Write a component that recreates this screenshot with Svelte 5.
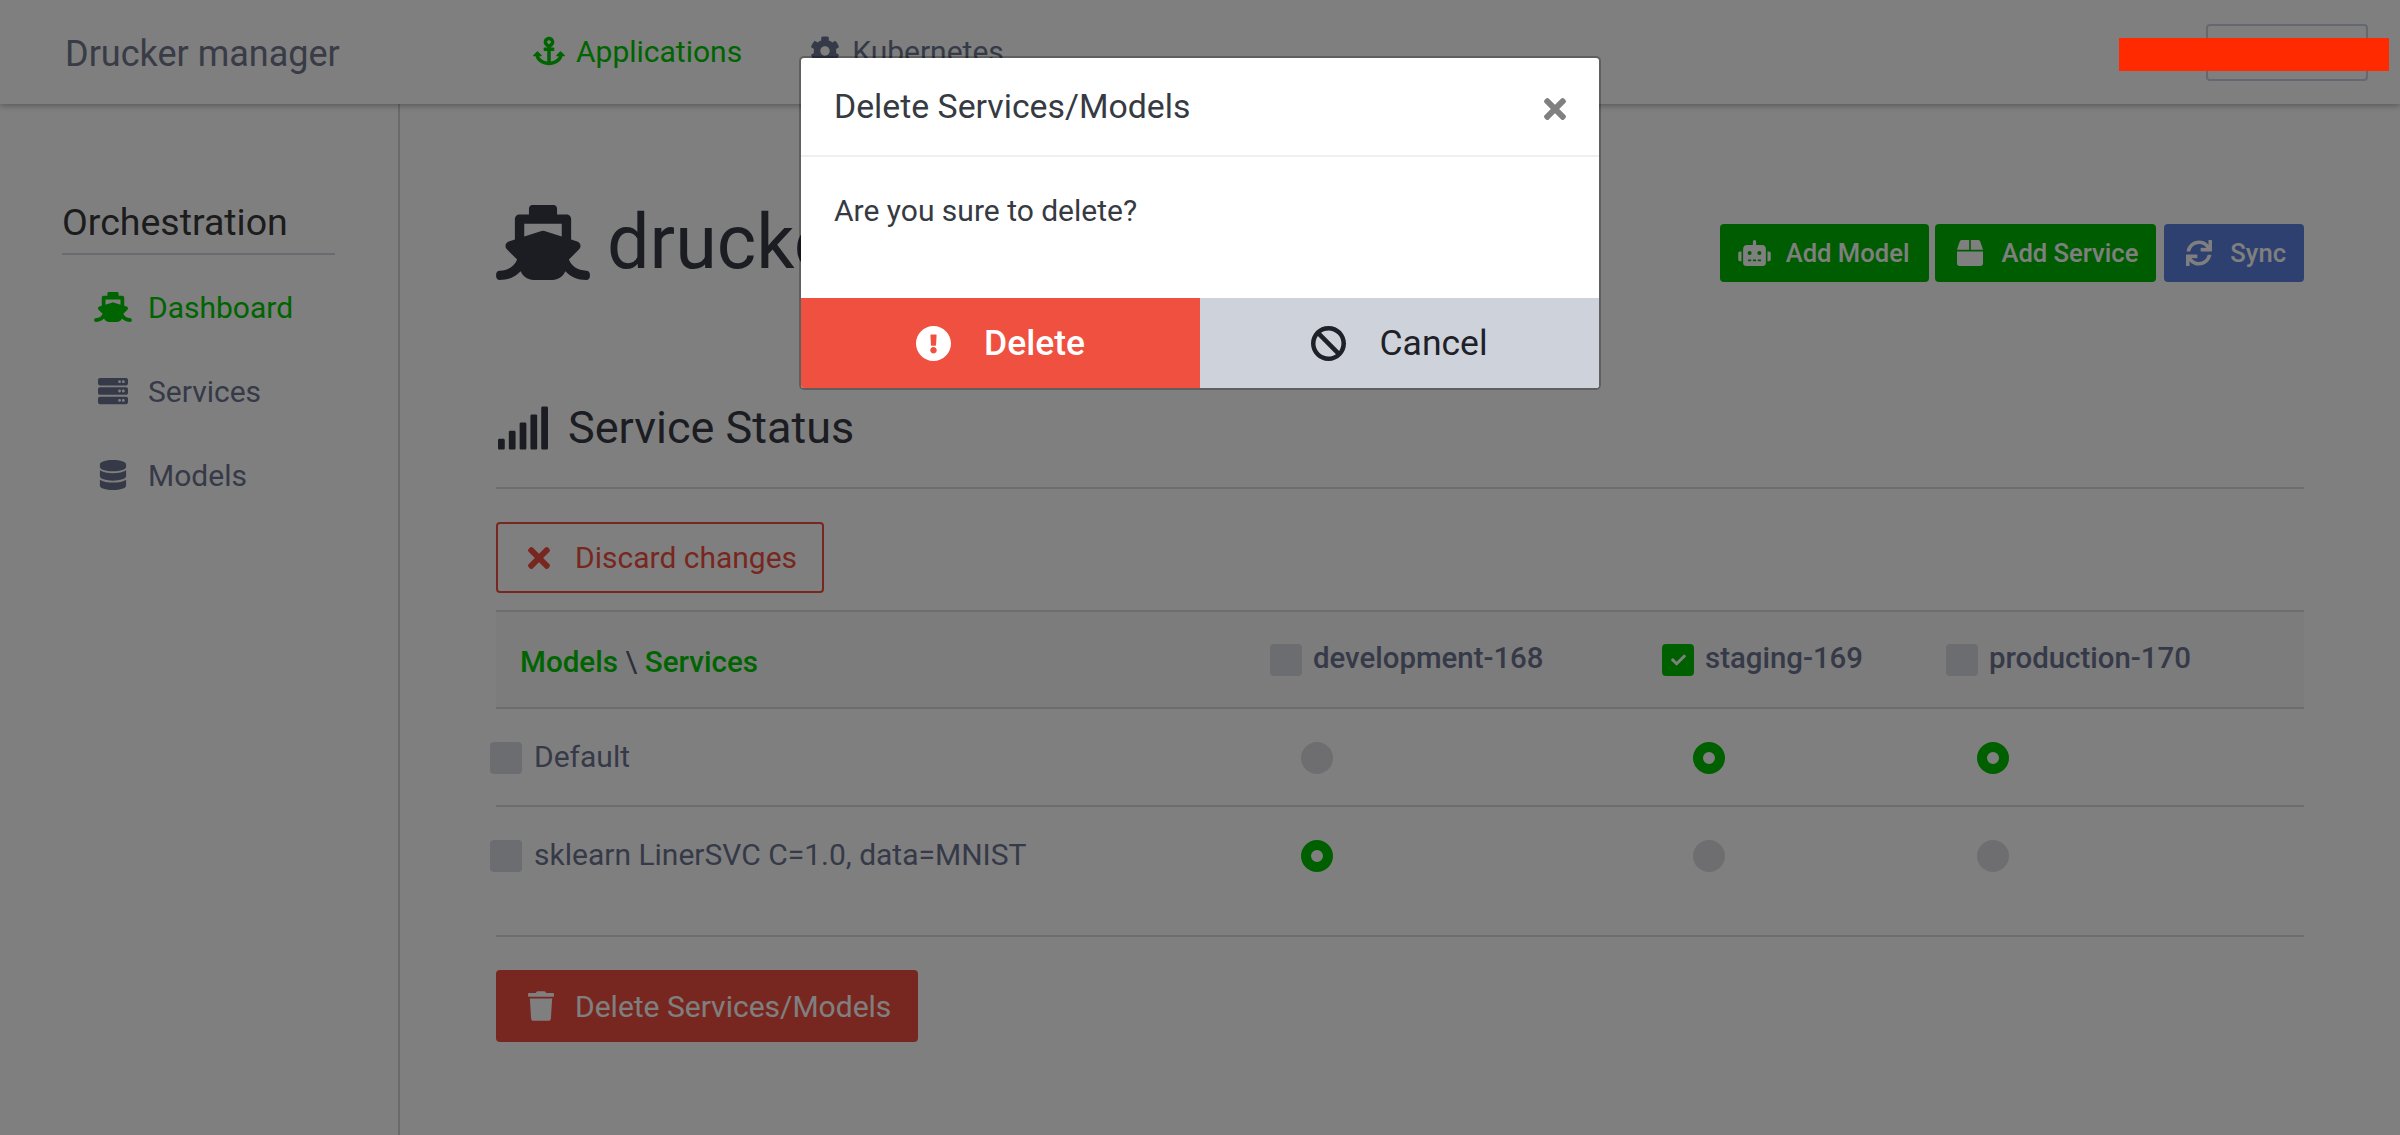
<script>
	const icons = {
		ship: ['0 0 640 512', 'M496.616 372.639l70.012-70.012c16.899-16.9 9.942-45.771-12.836-53.092L512 236.102V96c0-17.673-14.327-32-32-32h-64V24c0-13.255-10.745-24-24-24H248c-13.255 0-24 10.745-24 24v40h-64c-17.673 0-32 14.327-32 32v140.102l-41.792 13.433c-22.753 7.313-29.754 36.173-12.836 53.092l70.012 70.012C125.828 416.287 85.587 448 24 448c-13.255 0-24 10.745-24 24v16c0 13.255 10.745 24 24 24 61.023 0 107.499-20.61 143.258-59.396C181.677 487.432 216.021 512 256 512h128c39.979 0 74.323-24.568 88.742-59.396C508.495 491.384 554.968 512 616 512c13.255 0 24-10.745 24-24v-16c0-13.255-10.745-24-24-24-60.817 0-101.542-31.001-119.384-75.361zM192 128h256v87.531l-118.208-37.995a31.995 31.995 0 0 0-19.584 0L192 215.531V128z'],
		anchor: ['0 0 576 512', 'M12.971 352h32.394C67.172 454.735 181.944 512 288 512c106.229 0 220.853-57.38 242.635-160h32.394c10.691 0 16.045-12.926 8.485-20.485l-67.029-67.029c-4.686-4.686-12.284-4.686-16.971 0l-67.029 67.029c-7.56 7.56-2.206 20.485 8.485 20.485h35.146c-20.29 54.317-84.963 86.588-144.117 94.015V256h52c6.627 0 12-5.373 12-12v-40c0-6.627-5.373-12-12-12h-52v-5.47c37.281-13.178 63.995-48.725 64-90.518C384.005 43.772 341.605.738 289.37.01 235.723-.739 192 42.525 192 96c0 41.798 26.716 77.35 64 90.53V192h-52c-6.627 0-12 5.373-12 12v40c0 6.627 5.373 12 12 12h52v190.015c-58.936-7.399-123.82-39.679-144.117-94.015h35.146c10.691 0 16.045-12.926 8.485-20.485l-67.029-67.029c-4.686-4.686-12.284-4.686-16.971 0L4.485 331.515C-3.074 339.074 2.28 352 12.971 352zM288 64c17.645 0 32 14.355 32 32s-14.355 32-32 32-32-14.355-32-32 14.355-32 32-32z'],
		cog: ['0 0 512 512', 'M487.4 315.7l-42.6-24.6c4.3-23.2 4.3-47 0-70.2l42.6-24.6c4.9-2.8 7.1-8.6 5.5-14-11.1-35.6-30-67.8-54.7-94.6-3.8-4.1-10-5.1-14.8-2.3L380.8 110c-17.9-15.4-38.5-27.3-60.8-35.1V25.8c0-5.6-3.9-10.5-9.4-11.7-36.7-8.2-74.3-7.8-109.2 0-5.5 1.2-9.4 6.1-9.4 11.7V75c-22.2 7.9-42.8 19.8-60.8 35.1L88.7 85.5c-4.9-2.8-11-1.9-14.8 2.3-24.7 26.7-43.6 58.9-54.7 94.6-1.7 5.4.6 11.2 5.5 14L67.3 221c-4.3 23.2-4.3 47 0 70.2l-42.6 24.6c-4.9 2.8-7.1 8.6-5.5 14 11.1 35.6 30 67.8 54.7 94.6 3.8 4.1 10 5.1 14.8 2.3l42.6-24.6c17.9 15.4 38.5 27.3 60.8 35.1v49.2c0 5.6 3.9 10.5 9.4 11.7 36.7 8.2 74.3 7.8 109.2 0 5.5-1.2 9.4-6.1 9.4-11.7v-49.2c22.2-7.9 42.8-19.8 60.8-35.1l42.6 24.6c4.9 2.8 11 1.9 14.8-2.3 24.7-26.7 43.6-58.9 54.7-94.6 1.5-5.5-.7-11.3-5.6-14.1zM256 336c-44.1 0-80-35.9-80-80s35.9-80 80-80 80 35.9 80 80-35.9 80-80 80z'],
		server: ['0 0 512 512', 'M480 160H32c-17.673 0-32-14.327-32-32V64c0-17.673 14.327-32 32-32h448c17.673 0 32 14.327 32 32v64c0 17.673-14.327 32-32 32zm-48-88c-13.255 0-24 10.745-24 24s10.745 24 24 24 24-10.745 24-24-10.745-24-24-24zm-64 0c-13.255 0-24 10.745-24 24s10.745 24 24 24 24-10.745 24-24-10.745-24-24-24zm112 248H32c-17.673 0-32-14.327-32-32v-64c0-17.673 14.327-32 32-32h448c17.673 0 32 14.327 32 32v64c0 17.673-14.327 32-32 32zm-48-88c-13.255 0-24 10.745-24 24s10.745 24 24 24 24-10.745 24-24-10.745-24-24-24zm-64 0c-13.255 0-24 10.745-24 24s10.745 24 24 24 24-10.745 24-24-10.745-24-24-24zm112 248H32c-17.673 0-32-14.327-32-32v-64c0-17.673 14.327-32 32-32h448c17.673 0 32 14.327 32 32v64c0 17.673-14.327 32-32 32zm-48-88c-13.255 0-24 10.745-24 24s10.745 24 24 24 24-10.745 24-24-10.745-24-24-24zm-64 0c-13.255 0-24 10.745-24 24s10.745 24 24 24 24-10.745 24-24-10.745-24-24-24z'],
		database: ['0 0 448 512', 'M448 73.143v45.714C448 159.143 347.667 192 224 192S0 159.143 0 118.857V73.143C0 32.857 100.333 0 224 0s224 32.857 224 73.143zM448 176v102.857C448 319.143 347.667 352 224 352S0 319.143 0 278.857V176c48.125 33.143 136.208 48.572 224 48.572S399.874 209.143 448 176zm0 160v102.857C448 479.143 347.667 512 224 512S0 479.143 0 438.857V336c48.125 33.143 136.208 48.572 224 48.572S399.874 369.143 448 336z'],
		robot: ['0 0 640 512', 'M32,224H64V416H32A31.96166,31.96166,0,0,1,0,384V256A31.96166,31.96166,0,0,1,32,224Zm512-48V448a64.06328,64.06328,0,0,1-64,64H160a64.06328,64.06328,0,0,1-64-64V176a79.974,79.974,0,0,1,80-80H288V32a32,32,0,0,1,64,0V96H464A79.974,79.974,0,0,1,544,176ZM264,256a40,40,0,1,0-40,40A39.997,39.997,0,0,0,264,256Zm-8,128H192v32h64Zm96,0H288v32h64ZM456,256a40,40,0,1,0-40,40A39.997,39.997,0,0,0,456,256Zm-8,128H384v32h64ZM640,256V384a31.96166,31.96166,0,0,1-32,32H576V224h32A31.96166,31.96166,0,0,1,640,256Z'],
		box: ['0 0 512 512', 'M509.5 184.6L458.9 32.8C452.4 13.2 434.1 0 413.4 0H272v192h238.7c-.4-2.5-.4-5-1.2-7.4zM240 0H98.6c-20.7 0-39 13.2-45.5 32.8L2.5 184.6c-.8 2.4-.8 4.9-1.2 7.4H240V0zM0 224v240c0 26.5 21.5 48 48 48h416c26.5 0 48-21.5 48-48V224H0z'],
		sync: ['0 0 512 512', 'M440.65 12.57l4 82.77A247.16 247.16 0 0 0 255.83 8C134.73 8 33.91 94.92 12.29 209.82A12 12 0 0 0 24.09 224h49.05a12 12 0 0 0 11.67-9.26 175.91 175.91 0 0 1 317-56.94l-101.46-4.86a12 12 0 0 0-12.57 12v47.41a12 12 0 0 0 12 12H500a12 12 0 0 0 12-12V12a12 12 0 0 0-12-12h-47.37a12 12 0 0 0-11.98 12.57zM255.83 432a175.61 175.61 0 0 1-146-77.8l101.8 4.87a12 12 0 0 0 12.57-12v-47.4a12 12 0 0 0-12-12H12a12 12 0 0 0-12 12V500a12 12 0 0 0 12 12h47.35a12 12 0 0 0 12-12.6l-4.15-82.57A247.17 247.17 0 0 0 255.83 504c121.11 0 221.93-86.92 243.55-201.82a12 12 0 0 0-11.8-14.18h-49.05a12 12 0 0 0-11.67 9.26A175.86 175.86 0 0 1 255.83 432z'],
		signal: ['0 0 640 512', 'M216 288h-48c-8.84 0-16 7.16-16 16v192c0 8.84 7.16 16 16 16h48c8.84 0 16-7.16 16-16V304c0-8.84-7.16-16-16-16zM88 384H40c-8.84 0-16 7.16-16 16v96c0 8.84 7.16 16 16 16h48c8.84 0 16-7.16 16-16v-96c0-8.84-7.16-16-16-16zm256-192h-48c-8.84 0-16 7.16-16 16v288c0 8.84 7.16 16 16 16h48c8.84 0 16-7.16 16-16V208c0-8.84-7.16-16-16-16zm128-96h-48c-8.84 0-16 7.16-16 16v384c0 8.84 7.16 16 16 16h48c8.84 0 16-7.16 16-16V112c0-8.84-7.16-16-16-16zM600 0h-48c-8.84 0-16 7.16-16 16v480c0 8.84 7.16 16 16 16h48c8.84 0 16-7.16 16-16V16c0-8.84-7.16-16-16-16z'],
		times: ['0 80 352 352', 'M242.72 256l100.07-100.07c12.28-12.28 12.28-32.19 0-44.48l-22.24-22.24c-12.28-12.28-32.19-12.28-44.48 0L176 189.28 75.93 89.21c-12.28-12.28-32.19-12.28-44.48 0L9.21 111.45c-12.28 12.28-12.28 32.19 0 44.48L109.28 256 9.21 356.07c-12.28 12.28-12.28 32.19 0 44.48l22.24 22.24c12.28 12.28 32.2 12.28 44.48 0L176 322.72l100.07 100.07c12.28 12.28 32.2 12.28 44.48 0l22.24-22.24c12.28-12.28 12.28-32.19 0-44.48L242.72 256z'],
		trash: ['0 0 448 512', 'M432 32H312l-9.4-18.7A24 24 0 0 0 281.1 0H166.8a23.72 23.72 0 0 0-21.4 13.3L136 32H16A16 16 0 0 0 0 48v32a16 16 0 0 0 16 16h416a16 16 0 0 0 16-16V48a16 16 0 0 0-16-16zM53.2 467a48 48 0 0 0 47.9 45h245.8a48 48 0 0 0 47.9-45L416 128H32z'],
		alert: ['8 8 496 496', 'M504 256c0 136.997-111.043 248-248 248S8 392.997 8 256C8 119.083 119.043 8 256 8s248 111.083 248 248zm-248 50c-25.405 0-46 20.595-46 46s20.595 46 46 46 46-20.595 46-46-20.595-46-46-46zm-43.673-165.346l7.418 136c.347 6.364 5.609 11.346 11.982 11.346h48.546c6.373 0 11.635-4.982 11.982-11.346l7.418-136c.375-6.874-5.098-12.654-11.982-12.654h-63.383c-6.884 0-12.356 5.78-11.981 12.654z'],
		ban: ['8 8 496 496', 'M256 8C119.034 8 8 119.033 8 256s111.034 248 248 248 248-111.034 248-248S392.967 8 256 8zm130.108 117.892c65.448 65.448 70 165.481 20.677 235.637L150.47 105.216c70.204-49.356 170.226-44.735 235.638 20.676zM125.892 386.108c-65.448-65.448-70-165.481-20.677-235.637L361.53 406.784c-70.203 49.356-170.226 44.736-235.638-20.676z'],
		check: ['0 60 512 392', 'M173.898 439.404l-166.4-166.4c-9.997-9.997-9.997-26.206 0-36.204l36.203-36.204c9.997-10 26.207-10 36.204 0L192 312.69 432.095 72.596c9.997-9.997 26.207-9.997 36.204 0l36.203 36.204c9.997 9.997 9.997 26.206 0 36.204l-294.4 294.401c-9.998 9.997-26.207 9.997-36.204-.001z']
	};

	const sideLinks = [
		{ label: 'Dashboard', icon: 'ship', active: true },
		{ label: 'Services', icon: 'server' },
		{ label: 'Models', icon: 'database' }
	];

	const services = [
		{ name: 'development-168', checked: false },
		{ name: 'staging-169', checked: true },
		{ name: 'production-170', checked: false }
	];

	const models = [
		{ name: 'Default', on: [false, true, true] },
		{ name: 'sklearn LinerSVC C=1.0, data=MNIST', on: [true, false, false] }
	];
</script>

{#snippet icon(name, cls)}
	<svg class={cls} viewBox={icons[name][0]} fill="currentColor" aria-hidden="true"><path d={icons[name][1]} /></svg>
{/snippet}

<div class="page">
	<header class="topbar">
		<div class="brand">Drucker manager</div>
		<nav class="topnav">
			<a class="toplink active">{@render icon('anchor', 'ic-top')}<span>Applications</span></a>
			<a class="toplink">{@render icon('cog', 'ic-top')}<span>Kubernetes</span></a>
		</nav>
		<div class="user">
			<div class="user-btn"></div>
			<div class="redact"></div>
		</div>
	</header>

	<div class="body">
		<aside class="sidebar">
			<div class="side-title">Orchestration</div>
			<ul class="side-list">
				{#each sideLinks as link}
					<li class="side-link" class:active={link.active}>
						<span class="side-ic">{@render icon(link.icon, 'ic-side')}</span>
						<span>{link.label}</span>
					</li>
				{/each}
			</ul>
		</aside>

		<main class="main">
			<div class="title-row">
				<h1 class="title">{@render icon('ship', 'ic-title')}<span>drucker-sample</span></h1>
				<div class="actions">
					<button class="btn green robot">{@render icon('robot', 'ic-robot')}Add Model</button>
					<button class="btn green">{@render icon('box', 'ic-box')}Add Service</button>
					<button class="btn blue">{@render icon('sync', 'ic-box')}Sync</button>
				</div>
			</div>

			<h2 class="section">{@render icon('signal', 'ic-signal')}<span>Service Status</span></h2>

			<button class="btn-discard">{@render icon('times', 'ic-x')}Discard changes</button>

			<div class="table">
				<div class="row head">
					<div class="cell"><b>Models</b> \ <b>Services</b></div>
					{#each services as s}
						<div class="cell svc">
							<span class="box" class:on={s.checked}>
								{#if s.checked}{@render icon('check', 'ic-check')}{/if}
							</span>
							<span class="lift">{s.name}</span>
						</div>
					{/each}
				</div>
				{#each models as m, i}
					<div class="row" class:last={i === models.length - 1}>
						<div class="cell model">
							<span class="box"></span>
							<span class="lift">{m.name}</span>
						</div>
						{#each m.on as on}
							<div class="cell"><span class="radio" class:on></span></div>
						{/each}
					</div>
				{/each}
			</div>

			<button class="btn red">{@render icon('trash', 'ic-trash')}Delete Services/Models</button>
		</main>
	</div>

	<div class="backdrop">
		<div class="modal">
			<div class="modal-head">
				<span>Delete Services/Models</span>
				{@render icon('times', 'ic-close')}
			</div>
			<div class="modal-body">Are you sure to delete?</div>
			<div class="modal-foot">
				<button class="foot-btn danger">{@render icon('alert', 'ic-foot')}Delete</button>
				<button class="foot-btn muted">{@render icon('ban', 'ic-foot')}Cancel</button>
			</div>
		</div>
	</div>
</div>

<style>
	:global(body) {
		margin: 0;
		background: #fff;
	}

	.page {
		position: relative;
		width: 2400px;
		height: 1135px;
		overflow: hidden;
		font-family: Roboto, 'Liberation Sans', sans-serif;
		font-size: 30px;
		color: #6c7590;
		background: #fff;
	}

	svg {
		display: block;
		flex: none;
	}

	.topbar {
		position: relative;
		height: 104px;
		box-sizing: border-box;
		display: flex;
		align-items: center;
		padding-left: 65px;
		background: #fcfffc;
		box-shadow: 0 2px 6px rgba(0, 0, 0, 0.3);
	}

	.brand {
		width: 468px;
		margin-top: 3px;
		font-size: 36px;
		color: #72788e;
	}

	.topnav {
		display: flex;
		gap: 67px;
		margin-top: -2px;
	}

	.toplink {
		display: flex;
		align-items: center;
		gap: 11px;
		font-size: 30px;
		color: #6c7590;
	}

	.toplink.active {
		color: #00c800;
	}

	.ic-top {
		width: 32px;
		height: 30px;
	}

	.user {
		position: absolute;
		top: 24px;
		right: 11px;
		width: 270px;
		height: 57px;
	}

	.user-btn {
		position: absolute;
		top: 0;
		right: 21px;
		width: 162px;
		height: 57px;
		box-sizing: border-box;
		border: 2px solid #ccd0de;
		border-radius: 4px;
	}

	/* painted over the screenshot, so it sits above the backdrop */
	.redact {
		position: absolute;
		top: 14px;
		left: 0;
		z-index: 5;
		width: 270px;
		height: 33px;
		background: #ff2a00;
	}

	.body {
		display: flex;
		height: 1031px;
	}

	.sidebar {
		width: 400px;
		flex: none;
		box-sizing: border-box;
		padding: 96px 63px 0 62px;
		border-right: 2px solid #d4d4d4;
	}

	.side-title {
		height: 53px;
		font-size: 37.5px;
		line-height: 44px;
		color: #383838;
		border-bottom: 2px solid #d4d4de;
	}

	.side-list {
		margin: 0;
		padding: 0 0 0 32px;
		list-style: none;
	}

	.side-link {
		display: flex;
		align-items: center;
		height: 84px;
	}

	.side-link:first-child {
		margin-top: 10px;
	}

	.side-link.active {
		color: #00c800;
	}

	.side-ic {
		width: 54px;
		flex: none;
	}

	.ic-side {
		height: 30px;
		width: 38px;
	}

	.main {
		flex: 1;
		min-width: 0;
		box-sizing: border-box;
		padding: 96px 96px 0 96px;
	}

	.title-row {
		display: flex;
		justify-content: space-between;
		height: 200px;
	}

	.title {
		display: flex;
		align-items: center;
		gap: 17px;
		height: 84px;
		margin: 0;
		font-size: 75.5px;
		font-weight: 400;
		color: #383a44;
		white-space: nowrap;
	}

	.ic-title {
		width: 94px;
		height: 75px;
	}

	.actions {
		display: flex;
		gap: 6px;
		margin-top: 24px;
	}

	button {
		font-family: inherit;
		border: 0;
		padding: 0;
		cursor: pointer;
		white-space: nowrap;
	}

	.btn {
		display: inline-flex;
		align-items: center;
		height: 58px;
		padding: 0 18px 0 22px;
		border-radius: 4px;
		font-size: 25.6px;
		font-weight: 500;
		color: #fff;
	}

	.btn.robot {
		padding: 0 20px 0 18px;
	}

	.btn.green {
		background: #00b800;
	}

	.btn.blue {
		background: #5c80e0;
		margin-left: 2px;
	}

	.btn.red {
		margin-top: 33px;
		width: 422px;
		height: 72px;
		padding: 0 32px;
		background: #f14f40;
		font-size: 30px;
		font-weight: 400;
	}

	.ic-robot {
		width: 33px;
		height: 26px;
		margin-right: 15px;
	}

	.ic-box {
		width: 26px;
		height: 26px;
		margin-right: 18px;
	}

	.ic-trash {
		width: 26px;
		height: 30px;
		margin-right: 21px;
	}

	.section {
		display: flex;
		align-items: center;
		gap: 18px;
		height: 89px;
		box-sizing: border-box;
		margin: 0;
		border-bottom: 2px solid #dadada;
		font-size: 45px;
		font-weight: 400;
		color: #383a44;
		padding-bottom: 32px;
	}

	.ic-signal {
		width: 54px;
		height: 44px;
	}

	.btn-discard {
		display: inline-flex;
		align-items: center;
		margin-top: 33px;
		width: 328px;
		height: 71px;
		box-sizing: border-box;
		padding: 0 20px 0 30px;
		border: 2px solid #f14f40;
		border-radius: 4px;
		background: transparent;
		color: #f14f40;
		font-size: 30px;
	}

	.ic-x {
		width: 22px;
		height: 22px;
		margin-right: 25px;
	}

	.table {
		margin-top: 17px;
	}

	.row {
		display: grid;
		grid-template-columns: 750px 392px 284px 382px;
		height: 98px;
		box-sizing: border-box;
		border-bottom: 2px solid #dadada;
	}

	.row.head {
		height: 99px;
		background: #f8f8f8;
		border-top: 2px solid #dadada;
	}

	.row.last {
		height: 130px;
	}

	.cell {
		padding: 33px 0 0 24px;
		box-sizing: border-box;
		min-width: 0;
	}

	.head .cell {
		padding-top: 32px;
	}

	.head .cell:first-child {
		padding-top: 33px;
		font-size: 29.6px;
		color: #565e74;
	}

	.head b {
		font-weight: 500;
		color: #00c800;
	}

	.svc {
		display: flex;
		gap: 11px;
		font-weight: 500;
		font-size: 29.4px;
	}

	.model {
		display: flex;
		gap: 12px;
		margin-left: -30px;
	}

	.lift {
		margin-top: -3px;
	}

	.box {
		display: flex;
		align-items: center;
		justify-content: center;
		width: 32px;
		height: 32px;
		flex: none;
		border-radius: 4px;
		background: #d8dae0;
	}

	.box.on {
		background: #00c000;
		color: #fff;
	}

	.ic-check {
		width: 15px;
		height: 12px;
	}

	.radio {
		display: block;
		width: 32px;
		height: 32px;
		margin-left: 31px;
		box-sizing: border-box;
		border-radius: 50%;
		background: #dcdde2;
	}

	.radio.on {
		background: #fff;
		border: 10px solid #00c000;
	}

	.backdrop {
		position: absolute;
		inset: 0;
		z-index: 1;
		background: rgba(0, 0, 0, 0.5);
		display: flex;
		justify-content: center;
		align-items: flex-start;
	}

	.modal {
		width: 798px;
		height: 330px;
		box-sizing: border-box;
		margin-top: 58px;
		border-radius: 3px;
		box-shadow: 0 0 0 2px rgba(0, 0, 0, 0.25);
		background: #fff;
		display: flex;
		flex-direction: column;
		color: #363a42;
		overflow: hidden;
	}

	.modal-head {
		display: flex;
		justify-content: space-between;
		align-items: center;
		height: 99px;
		box-sizing: border-box;
		padding: 0 33px;
		border-bottom: 2px solid #efefef;
		font-size: 33.8px;
	}

	.ic-close {
		width: 22px;
		height: 22px;
		color: #808080;
		margin-top: 4px;
	}

	.modal-body {
		flex: 1;
		padding: 36px 33px 0;
		font-size: 30px;
	}

	.modal-foot {
		display: flex;
		height: 90px;
	}

	.foot-btn {
		flex: 1;
		display: flex;
		align-items: center;
		justify-content: center;
		gap: 33px;
		font-size: 35.5px;
	}

	.foot-btn.danger {
		background: #ef503f;
		color: #fff;
		font-weight: 500;
	}

	.foot-btn.muted {
		background: #ced2db;
		color: #1f2128;
	}

	.ic-foot {
		width: 35px;
		height: 35px;
	}
</style>
